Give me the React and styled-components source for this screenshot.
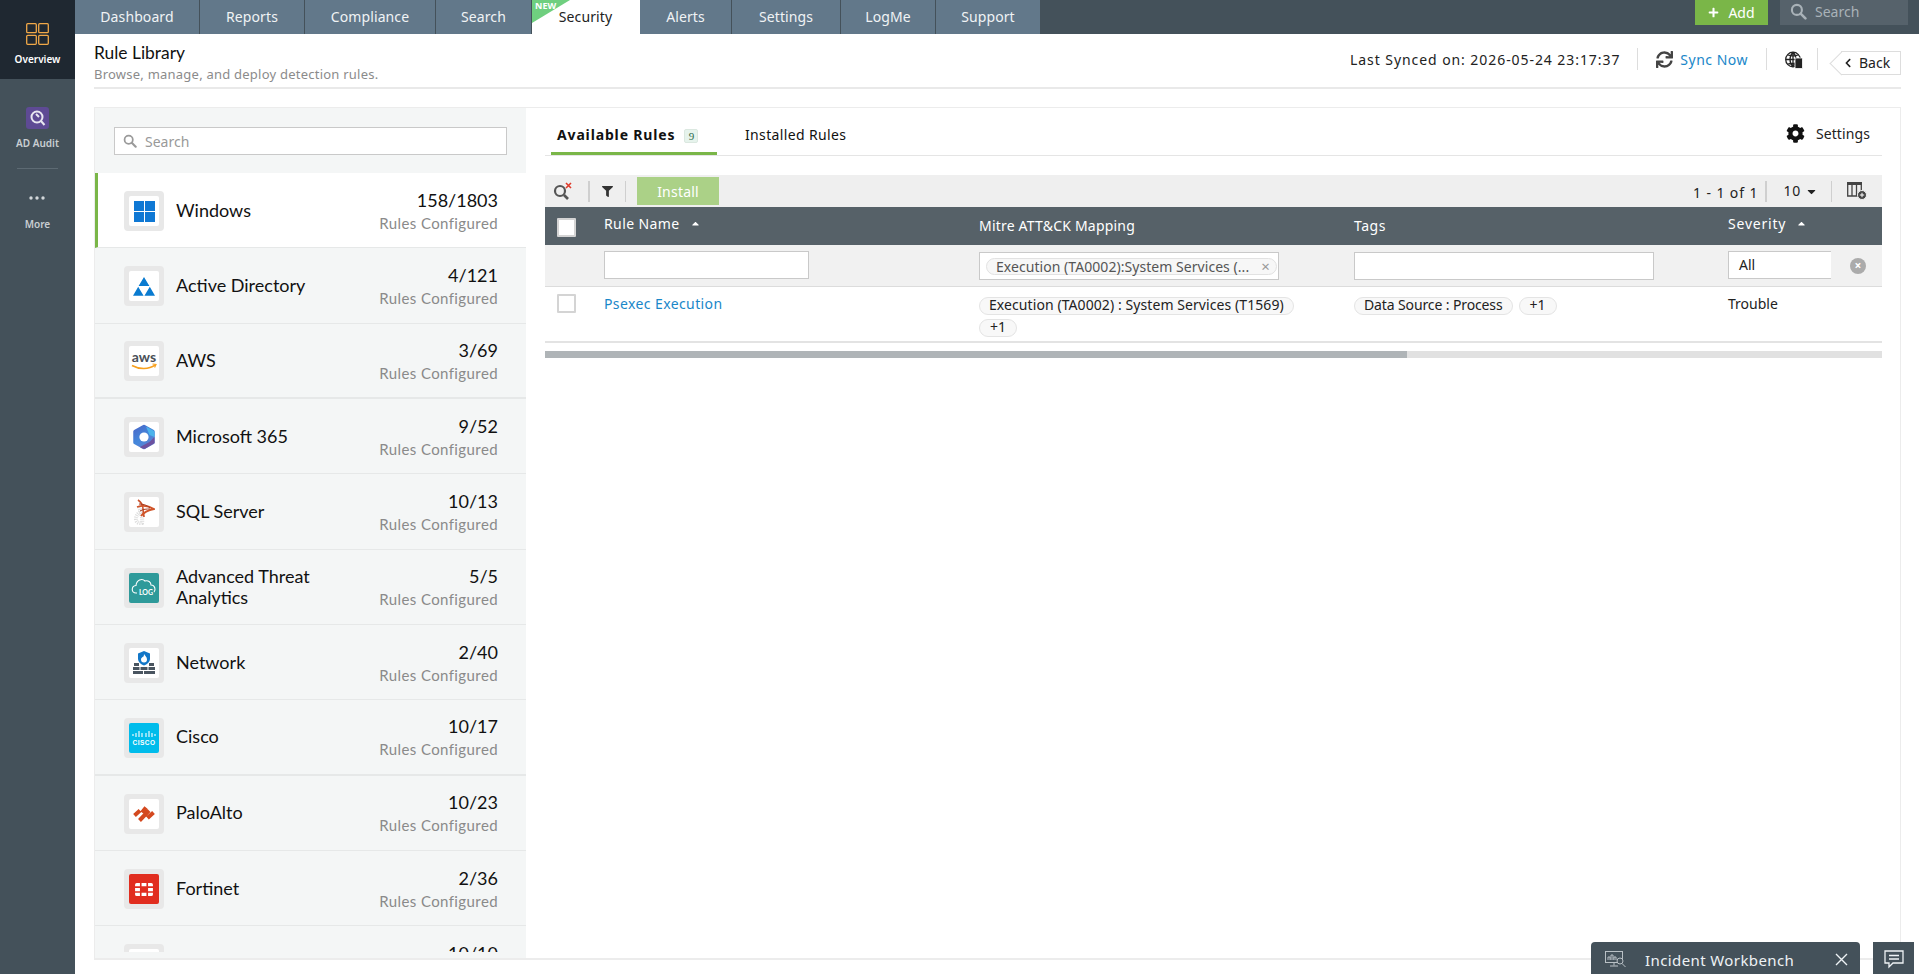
import React from "react";
import styled, { createGlobalStyle } from "styled-components";
import { FaCog, FaSync, FaFilter, FaChevronLeft, FaPlus, FaCaretDown, FaCaretUp } from "react-icons/fa";

const UI = `"Noto Sans", "Liberation Sans", sans-serif`;
const LIST = `Lato, "Liberation Sans", sans-serif`;

const Global = createGlobalStyle`
    html, body { margin: 0; height: 100%; overflow: hidden; background: white; }
    body { font-family: ${UI}; color: #222; }
    * { box-sizing: border-box; }
`;

const Page = styled.div`
    display: flex;
    width: 1919px;
    height: 974px;
    overflow: hidden;
`;

const Rail = styled.aside`
    width: 75px;
    flex: none;
    background: #44515a;
    display: flex;
    flex-direction: column;
    align-items: center;
`;
const RailTop = styled.div`
    width: 100%;
    height: 79px;
    background: #1f2831;
    padding-top: 23px;
    display: flex;
    flex-direction: column;
    align-items: center;
    gap: 7px;
    color: white;
    font-size: 10px;
    font-weight: 600;
`;
const RailItem = styled.div`
    margin-top: ${p => p.$top}px;
    display: flex;
    flex-direction: column;
    align-items: center;
    gap: ${p => p.$gap}px;
    color: #c9ced2;
    font-size: 10px;
    font-weight: 600;
`;
const RailLine = styled.div`
    width: 41px;
    height: 1px;
    background: #5d6a73;
    margin-top: 18px;
`;

const Main = styled.div`
    flex: 1;
    min-width: 0;
    display: flex;
    flex-direction: column;
`;
const Nav = styled.nav`
    height: 34px;
    flex: none;
    background: #44515a;
    display: flex;
`;
const Tab = styled.div`
    position: relative;
    width: ${p => p.$w}px;
    display: flex;
    align-items: center;
    justify-content: center;
    padding-bottom: 2px;
    font-size: 14px;
    letter-spacing: 0.1px;
    color: ${p => (p.$active ? "#222" : "#f0f3f5")};
    background: ${p => (p.$active ? "white" : "#62788a")};
    border-right: 1px solid ${p => (p.$active ? "white" : "#44515a")};
`;
const NewFlag = styled.div`
    position: absolute;
    left: 0;
    top: 0;
    width: 38px;
    height: 23px;
    background: #6fcf7f;
    clip-path: polygon(0 0, 100% 0, 0 100%);
    color: white;
    font-size: 9px;
    font-weight: 700;
    line-height: 11px;
    padding-left: 3px;
`;
const NavRight = styled.div`
    margin-left: auto;
    margin-right: 11px;
    display: flex;
    gap: 12px;
`;
const AddButton = styled.div`
    width: 73px;
    height: 25px;
    background: #7ab648;
    color: white;
    font-size: 14px;
    display: flex;
    align-items: center;
    justify-content: center;
    gap: 9px;
`;
const NavSearch = styled.div`
    width: 128px;
    height: 25px;
    background: #56626b;
    color: #a9b2b8;
    font-size: 14px;
    display: flex;
    align-items: center;
    gap: 8px;
    padding: 0 0 3px 10px;
`;

const Content = styled.div`
    flex: 1;
    min-height: 0;
    padding: 0 18px 14px 19px;
    display: flex;
    flex-direction: column;
`;
const Head = styled.header`
    height: 55px;
    flex: none;
    border-bottom: 2px solid #e9e9e9;
    display: flex;
    justify-content: space-between;
`;
const HeadText = styled.div`
    padding-top: 8px;
`;
const PageTitle = styled.div`
    font-family: ${LIST};
    font-size: 17.4px;
    line-height: 21px;
    color: #111;
`;
const PageSub = styled.div`
    font-size: 13px;
    line-height: 18px;
    letter-spacing: 0.23px;
    margin-top: 2px;
    color: #8b8b8b;
`;
const HeadRight = styled.div`
    display: flex;
    align-items: center;
    height: 50px;
    font-size: 14px;
    color: #222;
`;
const SyncedOn = styled.span`
    letter-spacing: 0.93px;
`;
const HeadSep = styled.span`
    width: 1px;
    height: 22px;
    background: #ddd;
    margin: 0 ${p => p.$r}px 0 ${p => p.$l}px;
`;
const SyncLink = styled.span`
    color: #1a87c9;
    margin-left: 7px;
    letter-spacing: 0.5px;
`;
const GlobeWrap = styled.span`
    display: flex;
    margin-top: 2px;
`;
const BackBtn = styled.div`
    position: relative;
    width: 60px;
    height: 24px;
    margin: 7px 0 0 11px;
    border: 1px solid #ddd;
    border-left: none;
    font-size: 14px;
    display: flex;
    align-items: center;
    gap: 6px;
    padding-left: 2px;
    &::before {
        content: "";
        position: absolute;
        left: -8px;
        top: 3px;
        width: 16px;
        height: 16px;
        border-left: 1px solid #ddd;
        border-bottom: 1px solid #ddd;
        transform: rotate(45deg);
    }
`;

const Card = styled.section`
    margin-top: 18px;
    flex: 1;
    min-height: 0;
    border: 1px solid #ececec;
    border-bottom-width: 2px;
    display: flex;
`;
const ListPanel = styled.div`
    width: 431px;
    flex: none;
    background: #f4f6f6;
    display: flex;
    flex-direction: column;
    padding-bottom: 6px;
`;
const ListSearch = styled.div`
    flex: none;
    height: 65px;
    padding: 19px 19px 0;
`;
const SearchBox = styled.div`
    height: 28px;
    background: white;
    border: 1px solid #c9c9c9;
    display: flex;
    align-items: center;
    gap: 8px;
    padding-left: 8px;
    color: #999;
    font-size: 14px;
`;
const ListScroll = styled.div`
    flex: 1;
    min-height: 0;
    overflow: hidden;
`;
const Item = styled.div`
    height: 75.33px;
    display: flex;
    align-items: center;
    padding: 2px 28px 0 ${p => (p.$active ? "26px" : "29px")};
    background: ${p => (p.$active ? "white" : "transparent")};
    border-bottom: ${p => (p.$thick ? "2px" : "1px")} solid #e6e8e8;
    border-left: ${p => (p.$active ? "3px solid #7ab648" : "none")};
`;
const IconBox = styled.div`
    width: 40px;
    height: 40px;
    flex: none;
    background: #e8e8e8;
    border-radius: 4px;
    padding: 5px;
`;
const IconFace = styled.div`
    width: 30px;
    height: 30px;
    border-radius: 2px;
    background: ${p => p.$bg || "white"};
    display: flex;
    align-items: center;
    justify-content: center;
    overflow: hidden;
`;
const ItemName = styled.div`
    font-family: ${LIST};
    font-size: 18px;
    line-height: 21px;
    color: #111;
    margin: -2px 0 0 12px;
    flex: 1;
    max-width: 170px;
`;
const ItemStats = styled.div`
    margin-left: auto;
    text-align: right;
    font-family: ${LIST};
`;
const Count = styled.div`
    font-size: 18px;
    line-height: 22px;
    color: #111;
`;
const Configured = styled.div`
    font-size: 15px;
    line-height: 22px;
    letter-spacing: 0.4px;
    margin-top: 1px;
    color: #8a8a8a;
`;

const RulesPanel = styled.div`
    flex: 1;
    min-width: 0;
    padding: 0 18px 0 19px;
`;
const Tabs = styled.div`
    height: 48px;
    display: flex;
    align-items: flex-end;
    border-bottom: 1px solid #e5e5e5;
    font-size: 14px;
`;
const RuleTab = styled.div`
    height: 45px;
    padding: 15px 0 0 ${p => (p.$active ? "6px" : "0")};
    width: ${p => (p.$active ? "166px" : "auto")};
    margin-left: ${p => (p.$active ? "6px" : "28px")};
    font-weight: ${p => (p.$active ? 700 : 400)};
    letter-spacing: ${p => (p.$active ? "0.85px" : "0.35px")};
    color: #111;
    border-bottom: ${p => (p.$active ? "3px solid #7ab648" : "none")};
    display: flex;
    gap: 9px;
`;
const Badge = styled.span`
    align-self: flex-start;
    margin-top: 4px;
    width: 14px;
    height: 14px;
    border-radius: 2px;
    background: #e6f3ec;
    border: 1px solid #dbe8e0;
    font-family: "Liberation Serif", serif;
    font-size: 11px;
    font-weight: 400;
    letter-spacing: 0;
    line-height: 12px;
    text-align: center;
    color: #2a6a4a;
`;
const SettingsLink = styled.div`
    margin-left: auto;
    margin-right: 12px;
    height: 45px;
    display: flex;
    align-items: center;
    gap: 11px;
    padding-top: 2px;
    letter-spacing: 0.1px;
`;
const Toolbar = styled.div`
    margin-top: 19px;
    height: 32px;
    background: #efefef;
    display: flex;
    align-items: center;
    font-size: 14px;
`;
const ClearSearch = styled.svg`
    margin-left: 8px;
`;
const ToolSep = styled.span`
    width: ${p => p.$w || 1}px;
    height: 21px;
    background: #cfcfcf;
    margin: 0 ${p => p.$r}px 0 ${p => p.$l}px;
`;
const Install = styled.div`
    width: 82px;
    height: 28px;
    margin-left: -1px;
    background: #abd187;
    color: white;
    letter-spacing: 0.2px;
    display: flex;
    align-items: center;
    justify-content: center;
`;
const Pager = styled.div`
    margin-left: auto;
    margin-right: 15px;
    display: flex;
    align-items: center;
    color: #222;
`;
const PageCount = styled.span`
    letter-spacing: 0.9px;
    margin-top: 2px;
`;
const PageSize = styled.span`
    letter-spacing: 0.8px;
    margin-top: -2px;
`;
const PageCaret = styled(FaCaretDown)`
    margin-left: 4px;
`;
const Row = styled.div`
    display: grid;
    grid-template-columns: 59px 375px 375px 374px 154px;
`;
const HeadRow = styled(Row)`
    height: 38px;
    background: #566168;
    color: white;
    font-size: 14px;
`;
const HeadCell = styled.div`
    display: flex;
    align-items: center;
    gap: 10px;
    letter-spacing: ${p => p.$track}px;
    padding-bottom: ${p => (p.$low ? "2px" : "6px")};
`;
const CheckCell = styled.div`
    padding: ${p => p.$top}px 0 0 12px;
`;
const Check = styled.div`
    width: 19px;
    height: 19px;
    background: white;
    border: 2px solid #d4d4d4;
    border-radius: 1px;
`;
const FilterRow = styled(Row)`
    height: 42px;
    background: #f1f1f1;
    border-bottom: 1px solid #dcdcdc;
    font-size: 14px;
`;
const FilterCell = styled.div`
    padding-top: ${p => p.$top || 7}px;
    display: flex;
    gap: 19px;
`;
const FilterInput = styled.div`
    width: ${p => p.$w}px;
    height: 28px;
    background: white;
    border: 1px solid #c9c9c9;
    padding: ${p => (p.$chip ? "5px 1px 0 6px" : "3px 0 0 10px")};
    border-right: ${p => (p.$open ? "none" : "1px solid #c9c9c9")};
`;
const FilterChip = styled.div`
    height: 17px;
    border: 1px solid #e2e2e2;
    border-radius: 9px;
    background: #f7f7f7;
    font-size: 14px;
    line-height: 13px;
    letter-spacing: 0.05px;
    color: #555;
    padding: 0 6px 1px 9px;
    display: flex;
    justify-content: space-between;
    align-items: center;
`;
const ChipClose = styled.span`
    color: #999;
    font-size: 15px;
`;
const ClearDot = styled.span`
    margin-top: 7px;
    width: 16px;
    height: 16px;
    border-radius: 50%;
    background: #ababab;
    color: white;
    font-size: 12px;
    font-weight: 700;
    line-height: 15px;
    text-align: center;
`;
const DataRow = styled(Row)`
    height: 56px;
    border-bottom: 2px solid #e3e3e3;
    font-size: 14px;
`;
const DataCell = styled.div`
    padding: ${p => p.$top || 7}px ${p => p.$right || 0}px 0 0;
    display: flex;
    flex-wrap: wrap;
    align-content: flex-start;
    gap: 4px 6px;
`;
const RuleLink = styled.span`
    color: #1a87c9;
    letter-spacing: 0.4px;
`;
const Chip = styled.span`
    height: 18px;
    min-width: 38px;
    border: 1px solid #e4e4e4;
    border-radius: 9px;
    background: #f8f8f8;
    font-size: 14px;
    line-height: 14px;
    letter-spacing: 0.08px;
    padding: 0 9px;
    text-align: center;
    color: #222;
    white-space: nowrap;
`;
const TagChip = styled(Chip)`
    letter-spacing: -0.12px;
`;
const ScrollBar = styled.div`
    margin-top: 8px;
    height: 7px;
    background: #e1e1e1;
`;
const ScrollThumb = styled.div`
    width: 862px;
    height: 100%;
    background: #afb4b7;
`;

const Dock = styled.div`
    position: fixed;
    right: 5px;
    bottom: 0;
    display: flex;
    gap: 13px;
`;
const Workbench = styled.div`
    width: 269px;
    height: 32px;
    background: #44515a;
    border-radius: 4px 4px 0 0;
    color: #eef2f5;
    font-size: 15px;
    letter-spacing: 0.4px;
    display: flex;
    align-items: center;
    padding: 3px 12px 0 14px;
`;
const WorkbenchTitle = styled.span`
    margin-left: 18px;
    flex: 1;
`;
const ChatBtn = styled.div`
    width: 41px;
    height: 32px;
    padding-top: 3px;
    background: #44515a;
    display: flex;
    align-items: center;
    justify-content: center;
`;

function SearchGlass({ size = 14, color = "#9a9a9a" }) {
    return (
        <svg width={size} height={size} viewBox="0 0 16 16" fill="none">
            <circle cx="6.5" cy="6.5" r="4.7" stroke={color} strokeWidth="2" />
            <path d="M10 10l4.5 4.5" stroke={color} strokeWidth="2.4" strokeLinecap="round" />
        </svg>
    );
}

const logos = {
    windows: (
        <svg width="21" height="21" viewBox="0 0 21 21" fill="#0f78d4">
            <rect width="10" height="10" /><rect x="11" width="10" height="10" />
            <rect y="11" width="10" height="10" /><rect x="11" y="11" width="10" height="10" />
        </svg>
    ),
    ad: (
        <svg width="22" height="19" viewBox="0 0 22 19" fill="#0a7bd0">
            <path d="M11 0l5.400 9H5.600zM5.200 9.800l5.400 9H0zM16.800 9.800l5.200 9H11.400z" />
        </svg>
    ),
    aws: (
        <svg width="28" height="22" viewBox="0 0 28 22">
            <text x="14" y="12" textAnchor="middle" fontFamily="Lato, sans-serif" fontSize="14" fontWeight="700" fill="#4a5058">aws</text>
            <path d="M2 15.500c7 4 17 4 23-.3" stroke="#f7a01d" strokeWidth="1.500" fill="none" />
            <path d="M22.500 14l3.500.4-1.400 3" stroke="#f7a01d" strokeWidth="1.200" fill="none" />
        </svg>
    ),
    m365: (
        <svg width="24" height="26" viewBox="0 0 24 26">
            <defs>
                <linearGradient id="m1" x1="0" y1="0" x2="0.6" y2="1">
                    <stop offset="0" stopColor="#4a68c8" />
                    <stop offset="0.6" stopColor="#4488dc" />
                    <stop offset="1" stopColor="#5f7fd0" />
                </linearGradient>
            </defs>
            <path d="M12 2.500L21 7.500v11L12 23.500 3 18.500v-11z" fill="url(#m1)" stroke="url(#m1)" strokeWidth="3.500" strokeLinejoin="round" />
            <path d="M14 2.500l7 4c1.500 1 1.500 2 1.500 3v3.500l-5 -2z" fill="#4cb4ec" />
            <path d="M22.500 13v6l-9 5.400c-2 .6-4 0-5.500-1.400l9.500-5z" fill="#6d519f" />
            <circle cx="12" cy="13" r="4.600" fill="white" />
        </svg>
    ),
    sql: (
        <svg width="22" height="26" viewBox="0 0 22 26" fill="none">
            <path d="M6 8c2 5 4 12 3 16-3 1-6-1-6-4 0-4 3-7 7-8" stroke="#ddd" strokeWidth="4" strokeDasharray="1 1" />
            <path d="M5 1c3 2 5 5 5 9 0 3 1 6 1 8" stroke="#c9502a" strokeWidth="1.600" />
            <path d="M4 8c6-2 12-1 17 2-5 1-10 3-13 7" stroke="#d0552a" strokeWidth="1.800" />
            <path d="M6 5c4 0 8 1 11 4M7 12c3-2 7-2 10-2" stroke="#a8391d" strokeWidth="1" />
        </svg>
    ),
    log: (
        <svg width="26" height="22" viewBox="0 0 26 22" fill="none">
            <path d="M6 16H5c-5 0-5-7 0-7.500C5.500 3 11 1 14 4c3-1 6 1 6 4 4 0 5 5 3 7" stroke="white" strokeWidth="1.100" />
            <text x="15" y="18" textAnchor="middle" fontFamily="Lato, sans-serif" fontSize="7" fontWeight="700" fill="white">LOG</text>
        </svg>
    ),
    network: (
        <svg width="22" height="24" viewBox="0 0 22 24">
            <path d="M11 0l6 2.500v5c0 3.500-3 6-6 7-3-1-6-3.500-6-7v-5z" fill="#1277c8" />
            <path d="M11 3c1 2 3 3 3 5.500a3 3 0 0 1-6 0C8 7 9 7 9.500 6 10.500 6 11 5 11 3z" fill="white" />
            <g fill="#4a5560">
                <rect x="1" y="12" width="5" height="3" /><rect x="16" y="12" width="5" height="3" />
                <rect x="0" y="16" width="6.500" height="3" /><rect x="7.500" y="16" width="7" height="3" /><rect x="15.500" y="16" width="6.500" height="3" />
                <rect x="0" y="20" width="10" height="3" /><rect x="11" y="20" width="11" height="3" />
            </g>
        </svg>
    ),
    cisco: (
        <svg width="24" height="16" viewBox="0 0 24 16">
            <g stroke="white" strokeWidth="1.100">
                <path d="M1 4v2M4 3v4M7 1v6M10 3v4M14 3v4M17 1v6M20 3v4M23 4v2" />
            </g>
            <text x="12" y="15" textAnchor="middle" fontFamily="Liberation Sans, sans-serif" fontSize="6.500" fontWeight="700" letterSpacing="0.500" fill="white">CISCO</text>
        </svg>
    ),
    palo: (
        <svg width="22" height="16" viewBox="0 0 22 16" fill="none" stroke="#d4491f" strokeWidth="4">
            <path d="M1.500 9.500L7 4.500M6.500 14.500L16 4.500M9 6.500L13 1.500M14.500 12L20.500 6.500" />
        </svg>
    ),
    fortinet: (
        <svg width="18" height="13" viewBox="0 0 22 16" fill="white">
            <path d="M0 2A2 2 0 0 1 2 0h4v4H0zM8 0h6v4H8zM16 0h4a2 2 0 0 1 2 2v2h-6zM0 6h6v4H0zM16 6h6v4h-6zM0 12h6v4H2a2 2 0 0 1-2-2zM8 12h6v4H8zM16 12h6v2a2 2 0 0 1-2 2h-4z" />
        </svg>
    ),
};

const tabs = [
    ["Dashboard", 125], ["Reports", 105], ["Compliance", 131], ["Search", 96],
    ["Security", 108], ["Alerts", 92], ["Settings", 109], ["LogMe", 95], ["Support", 105],
];

const sources = [
    { name: "Windows", count: "158/1803", logo: "windows", active: true },
    { name: "Active Directory", count: "4/121", logo: "ad" },
    { name: "AWS", count: "3/69", logo: "aws", thick: true },
    { name: "Microsoft 365", count: "9/52", logo: "m365" },
    { name: "SQL Server", count: "10/13", logo: "sql" },
    { name: "Advanced Threat Analytics", count: "5/5", logo: "log", bg: "#2e9a9a" },
    { name: "Network", count: "2/40", logo: "network" },
    { name: "Cisco", count: "10/17", logo: "cisco", bg: "#00bceb", thick: true },
    { name: "PaloAlto", count: "10/23", logo: "palo" },
    { name: "Fortinet", count: "2/36", logo: "fortinet", bg: "#e12d1f" },
    { name: "", count: "10/10" },
];

export default function App() {
    return (
        <>
            <Global />
            <Page>
                <Rail>
                    <RailTop>
                        <svg width="23" height="22" viewBox="0 0 23 22" fill="none" stroke="#f0a848" strokeWidth="1.300">
                            <rect x="0.700" y="0.700" width="9.600" height="9" rx="1" />
                            <rect x="12.700" y="0.700" width="9.600" height="9" rx="1" />
                            <rect x="0.700" y="12.300" width="9.600" height="9" rx="1" />
                            <rect x="12.700" y="12.300" width="9.600" height="9" rx="1" />
                        </svg>
                        Overview
                    </RailTop>
                    <RailItem $top={28} $gap={7}>
                        <svg width="23" height="22" viewBox="0 0 23 22" fill="none">
                            <rect width="23" height="22" rx="3" fill="#5e4a94" />
                            <circle cx="11" cy="10" r="5.500" stroke="#e8e6f0" strokeWidth="2" />
                            <path d="M10 7l3 3M15 14l3.500 4" stroke="#e8e6f0" strokeWidth="2" />
                        </svg>
                        AD Audit
                    </RailItem>
                    <RailLine />
                    <RailItem $top={27} $gap={17}>
                        <svg width="16" height="4" viewBox="0 0 16 4" fill="#d3d7da">
                            <circle cx="2" cy="2" r="1.700" /><circle cx="8" cy="2" r="1.700" /><circle cx="14" cy="2" r="1.700" />
                        </svg>
                        More
                    </RailItem>
                </Rail>
                <Main>
                    <Nav>
                        {tabs.map(([label, w]) => (
                            <Tab key={label} $w={w} $active={label === "Security"}>
                                {label === "Security" && <NewFlag>NEW</NewFlag>}
                                {label}
                            </Tab>
                        ))}
                        <NavRight>
                            <AddButton><FaPlus size={11} />Add</AddButton>
                            <NavSearch><SearchGlass size={17} color="#a9b2b8" />Search</NavSearch>
                        </NavRight>
                    </Nav>
                    <Content>
                        <Head>
                            <HeadText>
                                <PageTitle>Rule Library</PageTitle>
                                <PageSub>Browse, manage, and deploy detection rules.</PageSub>
                            </HeadText>
                            <HeadRight>
                                <SyncedOn>Last Synced on: 2026-05-24 23:17:37</SyncedOn>
                                <HeadSep $l={17} $r={18} />
                                <FaSync size={17} color="#444" />
                                <SyncLink>Sync Now</SyncLink>
                                <HeadSep $l={18} $r={18} />
                                <GlobeWrap>
                                    <svg width="18" height="18" viewBox="0 0 18 18" fill="none" stroke="#222" strokeWidth="1.300">
                                        <circle cx="8" cy="8.500" r="7.300" />
                                        <path d="M1 8.500h14M8 1.200v14.500M3 4c3 1 7 1 10 0M3 13c3-1 7-1 10 0M8 1.200C4 5 4 12 8 15.700M8 1.200c4 3.800 4 10.500 0 14.500" />
                                        <rect x="10" y="7" width="7.500" height="10.500" fill="#222" stroke="white" strokeWidth="0.800" />
                                    </svg>
                                </GlobeWrap>
                                <HeadSep $l={14} $r={12} />
                                <BackBtn><FaChevronLeft size={10} />Back</BackBtn>
                            </HeadRight>
                        </Head>
                        <Card>
                            <ListPanel>
                                <ListSearch>
                                    <SearchBox><SearchGlass />Search</SearchBox>
                                </ListSearch>
                                <ListScroll>
                                    {sources.map(s => (
                                        <Item key={s.count} $active={s.active} $thick={s.thick}>
                                            <IconBox>
                                                <IconFace $bg={s.bg}>{logos[s.logo]}</IconFace>
                                            </IconBox>
                                            <ItemName>{s.name}</ItemName>
                                            <ItemStats>
                                                <Count>{s.count}</Count>
                                                <Configured>Rules Configured</Configured>
                                            </ItemStats>
                                        </Item>
                                    ))}
                                </ListScroll>
                            </ListPanel>
                            <RulesPanel>
                                <Tabs>
                                    <RuleTab $active>Available Rules<Badge>9</Badge></RuleTab>
                                    <RuleTab>Installed Rules</RuleTab>
                                    <SettingsLink><FaCog size={19} color="#111" />Settings</SettingsLink>
                                </Tabs>
                                <Toolbar>
                                    <ClearSearch width="20" height="18" viewBox="0 0 20 18" fill="none">
                                        <circle cx="7" cy="9" r="5" stroke="#555" strokeWidth="2.200" />
                                        <path d="M11 13l4 4" stroke="#555" strokeWidth="2.600" />
                                        <path d="M13 1l5 5M18 1l-5 5" stroke="#e03a2a" strokeWidth="1.600" />
                                    </ClearSearch>
                                    <ToolSep $l={15} $r={12} $w={2} />
                                    <FaFilter size={11} color="#333" />
                                    <ToolSep $l={12} $r={12} />
                                    <Install>Install</Install>
                                    <Pager>
                                        <PageCount>1 - 1 of 1</PageCount>
                                        <ToolSep $l={7} $r={16} $w={2} />
                                        <PageSize>10</PageSize>
                                        <PageCaret size={13} />
                                        <ToolSep $l={13} $r={15} />
                                        <svg width="20" height="18" viewBox="0 0 20 18" fill="none">
                                            <rect x="0" y="0" width="15" height="3" fill="#444" />
                                            <path d="M0.700 3v11h13.600V3M5 3v11M9.500 3v11" stroke="#444" strokeWidth="1.300" />
                                            <circle cx="15" cy="13" r="4.500" fill="#444" stroke="#efefef" />
                                            <path d="M12.800 13h4.400M15 10.800v4.400" stroke="white" />
                                        </svg>
                                    </Pager>
                                </Toolbar>
                                <HeadRow>
                                    <CheckCell $top={11}><Check /></CheckCell>
                                    <HeadCell $track={0.4}>Rule Name <FaCaretUp size={11} /></HeadCell>
                                    <HeadCell $low $track={0.2}>Mitre ATT&amp;CK Mapping</HeadCell>
                                    <HeadCell $low $track={0.5}>Tags</HeadCell>
                                    <HeadCell $track={0.8}>Severity <FaCaretUp size={11} /></HeadCell>
                                </HeadRow>
                                <FilterRow>
                                    <div />
                                    <FilterCell $top={6}><FilterInput $w={205} /></FilterCell>
                                    <FilterCell>
                                        <FilterInput $w={300} $chip>
                                            <FilterChip>Execution (TA0002):System Services (...<ChipClose>×</ChipClose></FilterChip>
                                        </FilterInput>
                                    </FilterCell>
                                    <FilterCell><FilterInput $w={300} /></FilterCell>
                                    <FilterCell $top={6}>
                                        <FilterInput $w={103} $open>All</FilterInput>
                                        <ClearDot>×</ClearDot>
                                    </FilterCell>
                                </FilterRow>
                                <DataRow>
                                    <CheckCell $top={7}><Check /></CheckCell>
                                    <DataCell $top={7}><RuleLink>Psexec Execution</RuleLink></DataCell>
                                    <DataCell $top={10} $right={30}>
                                        <Chip>Execution (TA0002) : System Services (T1569)</Chip>
                                        <Chip>+1</Chip>
                                    </DataCell>
                                    <DataCell $top={10}>
                                        <TagChip>Data Source : Process</TagChip>
                                        <Chip>+1</Chip>
                                    </DataCell>
                                    <DataCell $top={7}>Trouble</DataCell>
                                </DataRow>
                                <ScrollBar><ScrollThumb /></ScrollBar>
                            </RulesPanel>
                        </Card>
                    </Content>
                </Main>
            </Page>
            <Dock>
                <Workbench>
                    <svg width="22" height="18" viewBox="0 0 22 18" fill="none" stroke="#b9c0c5" strokeWidth="1">
                        <rect x="0.500" y="0.500" width="17" height="11" />
                        <path d="M9 11.500v3M5 15h8M3 9V6h2v3M6 9V4h2v5M9 9V6h2v3" />
                        <circle cx="15" cy="10" r="3" fill="#44515a" />
                        <path d="M17 12.500l3.500 3.500" />
                    </svg>
                    <WorkbenchTitle>Incident Workbench</WorkbenchTitle>
                    <svg width="13" height="13" viewBox="0 0 13 13" stroke="#eef2f5" strokeWidth="1.400">
                        <path d="M1 1l11 11M12 1L1 12" />
                    </svg>
                </Workbench>
                <ChatBtn>
                    <svg width="20" height="19" viewBox="0 0 20 19" fill="none" stroke="#eef2f5" strokeWidth="1.300">
                        <path d="M1 1h18v12H9l-4 4v-4H1z" />
                        <path d="M5 5.500h10M5 9h10" />
                    </svg>
                </ChatBtn>
            </Dock>
        </>
    );
}
